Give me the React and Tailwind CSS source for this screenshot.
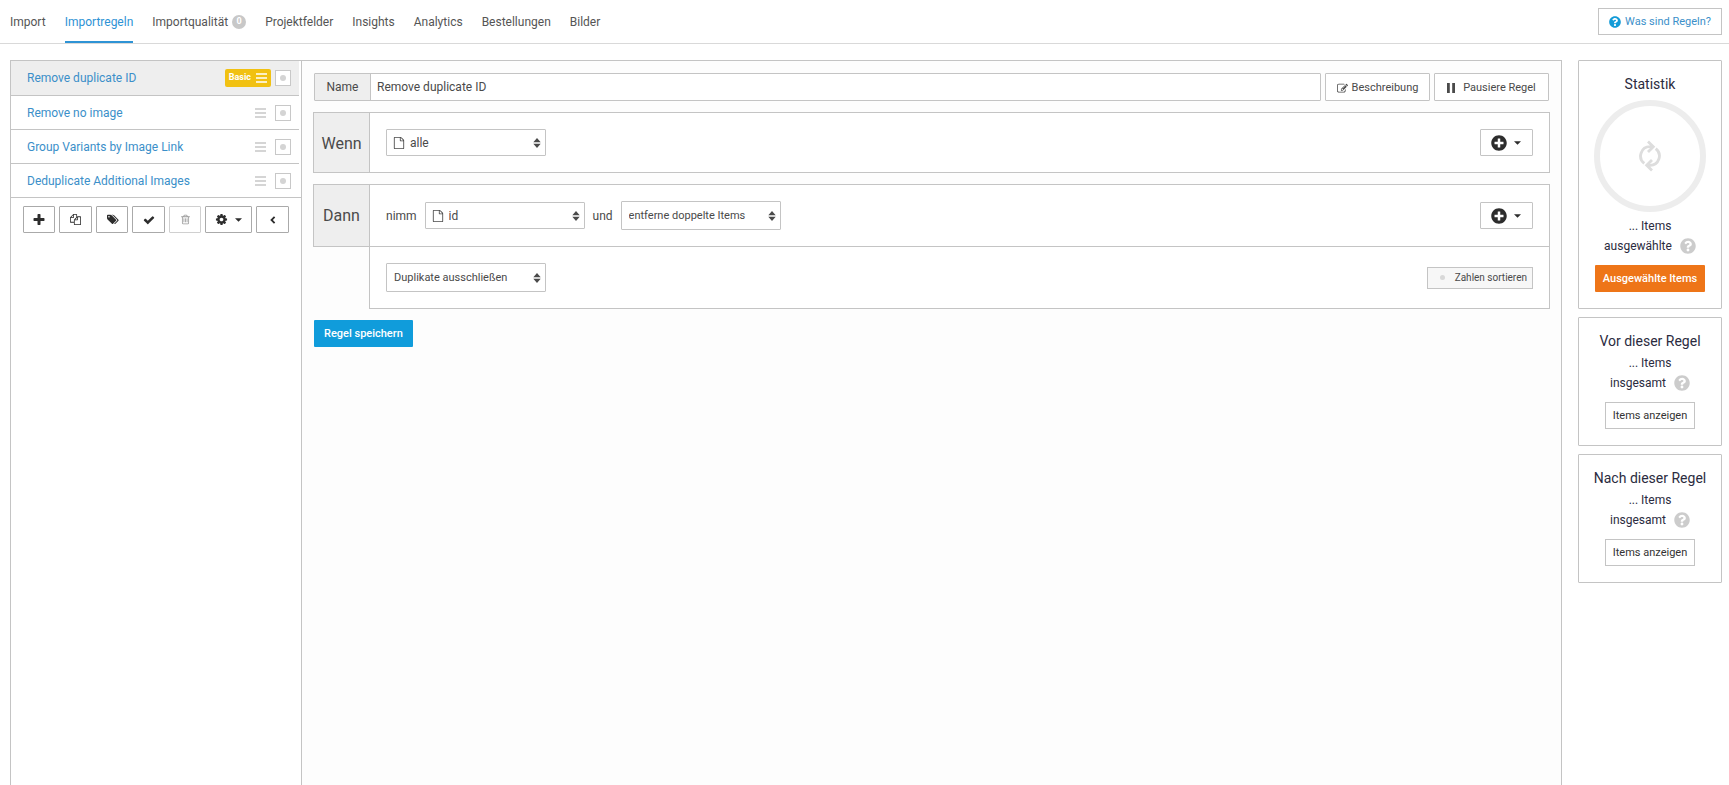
import React from "react";
import { FaPlusCircle, FaQuestionCircle } from "react-icons/fa";

const PATHS = {
  plus: "M1600 736v192q0 40-28 68t-68 28h-416v416q0 40-28 68t-68 28h-192q-40 0-68-28t-28-68v-416h-416q-40 0-68-28t-28-68v-192q0-40 28-68t68-28h416v-416q0-40 28-68t68-28h192q40 0 68 28t28 68v416h416q40 0 68 28t28 68z",
  copy: "M1696 384q40 0 68 28t28 68v1216q0 40-28 68t-68 28h-960q-40 0-68-28t-28-68v-288h-544q-40 0-68-28t-28-68v-672q0-40 20-88t48-76l408-408q28-28 76-48t88-20h416q40 0 68 28t28 68v328q68-40 128-40h416zm-544 213l-299 299h299v-299zm-640-384l-299 299h299v-299zm196 647l316-316v-416h-384v416q0 40-28 68t-68 28h-416v640h512v-256q0-40 20-88t48-76zm956 804v-1152h-384v416q0 40-28 68t-68 28h-416v640h896z",
  edit: "M888 1184l116-116-152-152-116 116v56h96v96h56zm440-720q-16-16-33 1l-350 350q-17 17-1 33t33-1l350-350q17-17 1-33zm80 594v190q0 119-84.5 203.5t-203.5 84.5h-832q-119 0-203.5-84.5t-84.500-203.500v-832q0-119 84.500-203.500t203.500-84.500h832q63 0 117 25 15 7 18 23 3 17-9 29l-49 49q-14 14-32 8-23-6-45-6h-832q-66 0-113 47t-47 113v832q0 66 47 113t113 47h832q66 0 113-47t47-113v-126q0-13 9-22l64-64q15-15 35-7t20 29zm-96-738l288 288-672 672h-288v-288zm444 132l-92 92-288-288 92-92q28-28 68-28t68 28l152 152q28 28 28 68t-28 68z",
  file: "M1596 380q28 28 48 76t20 88v1152q0 40-28 68t-68 28h-1344q-40 0-68-28t-28-68v-1600q0-40 28-68t68-28h896q40 0 88 20t76 48zm-444-244v376h376q-10-29-22-41l-313-313q-12-12-41-22zm384 1528v-1024h-416q-40 0-68-28t-28-68v-416h-768v1536h1280z",
  trash: "M704 736v576q0 14-9 23t-23 9h-64q-14 0-23-9t-9-23v-576q0-14 9-23t23-9h64q14 0 23 9t9 23zm256 0v576q0 14-9 23t-23 9h-64q-14 0-23-9t-9-23v-576q0-14 9-23t23-9h64q14 0 23 9t9 23zm256 0v576q0 14-9 23t-23 9h-64q-14 0-23-9t-9-23v-576q0-14 9-23t23-9h64q14 0 23 9t9 23zm128 724v-948h-896v948q0 22 7 40.5t14.5 27 10.5 8.5h832q3 0 10.5-8.5t14.5-27 7-40.5zm-672-1076h448l-48-117q-7-9-17-11h-317q-10 2-17 11zm928 32v64q0 14-9 23t-23 9h-96v948q0 83-47 143.5t-113 60.5h-832q-66 0-113-58.5t-47-141.5v-952h-96q-14 0-23-9t-9-23v-64q0-14 9-23t23-9h309l70-167q15-37 54-63t79-26h320q40 0 79 26t54 63l70 167h309q14 0 23 9t9 23z",
  tags: "M448 448q0-53-37.5-90.5t-90.5-37.5-90.5 37.5-37.5 90.5 37.5 90.5 90.5 37.5 90.5-37.5 37.5-90.5zm1067 576q0 53-37 90l-491 492q-39 37-91 37-53 0-90-37l-715-716q-38-37-64.5-101t-26.5-117v-416q0-52 38-90t90-38h416q53 0 117 26.5t102 64.5l715 714q37 39 37 91zm384 0q0 53-37 90l-491 492q-39 37-91 37-36 0-59-14t-53-45l470-470q37-37 37-90 0-52-37-91l-715-714q-38-38-102-64.5t-117-26.5h224q53 0 117 26.5t102 64.5l715 714q37 39 37 91z",
  check: "M1671 566q0 40-28 68l-724 724-136 136q-28 28-68 28t-68-28l-136-136-362-362q-28-28-28-68t28-68l136-136q28-28 68-28t68 28l294 295 656-657q28-28 68-28t68 28l136 136q28 28 28 68z",
  cog: "M1152 896q0-106-75-181t-181-75-181 75-75 181 75 181 181 75 181-75 75-181zm512-109v222q0 12-8 23t-20 13l-185 28q-19 54-39 91 35 50 107 138 10 12 10 25t-9 23q-27 37-99 108t-94 71q-12 0-26-9l-138-108q-44 23-91 38-16 136-29 186-7 28-36 28h-222q-14 0-24.5-8.5t-11.5-21.5l-28-184q-49-16-90-37l-141 107q-10 9-25 9-14 0-25-11-126-114-165-168-7-10-7-23 0-12 8-23 15-21 51-66.5t54-70.5q-27-50-41-99l-183-27q-13-2-21-12.5t-8-23.5v-222q0-12 8-23t19-13l186-28q14-46 39-92-40-57-107-138-10-12-10-24 0-10 9-23 26-36 98.5-107.5t94.5-71.5q13 0 26 10l138 107q44-23 91-38 16-136 29-186 7-28 36-28h222q14 0 24.5 8.5t11.5 21.5l28 184q49 16 90 37l142-107q9-9 24-9 13 0 25 10 129 119 165 170 7 8 7 22 0 12-8 23-15 21-51 66.5t-54 70.5q26 50 41 98l183 28q13 2 21 12.5t8 23.5z",
};

function Icon({ name, className }) {
  return (
    <svg viewBox="0 0 1792 1792" fill="currentColor" aria-hidden="true" className={`shrink-0 overflow-visible ${className}`}>
      <path d={PATHS[name]} />
    </svg>
  );
}

function Caret() {
  return (
    <svg viewBox="0 0 8 4" fill="currentColor" aria-hidden="true" className="h-1 w-[7px] shrink-0">
      <path d="M0 0h8L4 4z" />
    </svg>
  );
}

function Bars({ className = "" }) {
  return (
    <svg viewBox="0 0 11 10" fill="none" stroke="currentColor" strokeWidth="1.7" aria-hidden="true" className={`h-[10px] w-[11px] shrink-0 ${className}`}>
      <path d="M0 1h11M0 5h11M0 9h11" />
    </svg>
  );
}

const NAV = ["Import", "Importregeln", "Importqualität", "Projektfelder", "Insights", "Analytics", "Bestellungen", "Bilder"];

function Header() {
  return (
    <header className="flex h-11 items-stretch justify-between border-b border-[#d9d9d9] pr-[7px] pl-[10px]">
      <nav className="flex gap-[19px] text-[12px] text-[#555]">
        {NAV.map((label, i) => (
          <a
            key={label}
            href="#"
            className={
              i === 1
                ? "flex items-center border-b-2 border-[#2e93d5] pt-[2px] text-[#2e93d5]"
                : "flex items-center gap-1"
            }
          >
            {label}
            {i === 2 && (
              <span className="flex size-[14px] items-center justify-center rounded-full bg-[#c8c8c8] text-[9px] font-bold text-white">0</span>
            )}
          </a>
        ))}
      </nav>
      <button className="mt-2 flex h-[27px] items-center gap-1 border border-[#c4c4c4] bg-white px-[10px] pt-px text-[11px] text-[#3b8fc9]">
        <FaQuestionCircle className="size-3 text-[#139bd8]" />
        Was sind Regeln?
      </button>
    </header>
  );
}

const RULES = ["Remove duplicate ID", "Remove no image", "Group Variants by Image Link", "Deduplicate Additional Images"];

function ToolButton({ label, className = "w-8", disabled, children }) {
  return (
    <button
      aria-label={label}
      disabled={disabled}
      className={`flex h-[27px] items-center justify-center rounded-[1px] border bg-white ${disabled ? "border-[#d0d0d0] text-[#999]" : "border-[#aaa] text-[#2d2d2d]"} ${className}`}
    >
      {children}
    </button>
  );
}

function RuleList() {
  return (
    <aside className="w-[291px] shrink-0 border-t border-l border-[#c4c4c4]">
      <ul>
        {RULES.map((rule, i) => (
          <li
            key={rule}
            className={`flex items-center border-b border-[#c4c4c4] pl-4 ${i === 0 ? "h-[35px] bg-[#eee]" : "h-[34px]"} ${i < 3 ? "mr-[2px] pr-2" : "pr-[10px]"}`}
          >
            <a href="#" className="flex-1 text-[12px] text-[#3b8fc9]">{rule}</a>
            {i === 0 ? (
              <span className="mr-1 flex h-[18px] items-center gap-[5px] rounded-[2px] bg-[#f1c112] px-1 text-[9px] font-bold text-white">
                Basic
                <Bars />
              </span>
            ) : (
              <Bars className="mr-[9px] text-[#c8c8c8]" />
            )}
            <button aria-label={`${rule} umschalten`} className="flex size-4 items-center justify-center border border-[#c8c8c8] bg-white">
              <span className="size-[6px] rounded-full bg-[#d4d4d4]" />
            </button>
          </li>
        ))}
      </ul>
      <div className="flex gap-1 px-3 pt-2">
        <ToolButton label="Neu"><Icon name="plus" className="size-[14px]" /></ToolButton>
        <ToolButton label="Kopieren" className="w-[33px]"><Icon name="copy" className="size-[11px]" /></ToolButton>
        <ToolButton label="Tags"><Icon name="tags" className="size-[11px]" /></ToolButton>
        <ToolButton label="Anwenden" className="w-[33px]"><Icon name="check" className="size-3" /></ToolButton>
        <ToolButton label="Löschen" disabled><Icon name="trash" className="size-[11px]" /></ToolButton>
        <ToolButton label="Einstellungen" className="w-[47px] gap-[7px]">
          <Icon name="cog" className="size-[13px]" />
          <Caret />
        </ToolButton>
        <ToolButton label="Einklappen" className="w-[33px]">
          <svg viewBox="0 0 6 8" fill="none" stroke="currentColor" strokeWidth="1.8" aria-hidden="true" className="h-2 w-[6px]">
            <path d="M4.6.9 1.5 4l3.1 3.1" />
          </svg>
        </ToolButton>
      </div>
    </aside>
  );
}

function Select({ label, value, icon }) {
  return (
    <div className={`relative flex w-40 items-center rounded-[1px] border border-[#c4c4c4] bg-white ${icon ? "h-[27px]" : "h-[29px]"}`}>
      {icon && <Icon name="file" className="pointer-events-none absolute left-[6px] size-3" />}
      <select
        aria-label={label}
        className={`h-full w-full appearance-none bg-transparent outline-none ${icon ? "pl-[23px] text-[12px]" : "pt-px pl-[7px] text-[11px]"}`}
      >
        <option>{value}</option>
      </select>
      <svg viewBox="0 0 8 10" fill="currentColor" aria-hidden="true" className="pointer-events-none absolute right-1 h-[10px] w-2">
        <path d="M.3 4.3h7.4L4 0zM.3 5.7h7.4L4 10z" />
      </svg>
    </div>
  );
}

function AddButton() {
  return (
    <button aria-label="Hinzufügen" className="ml-auto flex h-[27px] w-[53px] items-center justify-center gap-[7px] rounded-[1px] border border-[#c4c4c4] bg-white pr-[2px] text-[#2d2d2d]">
      <FaPlusCircle className="size-4" />
      <Caret />
    </button>
  );
}

function RuleEditor() {
  return (
    <main className="min-w-0 flex-1 border border-b-0 border-[#c4c4c4] bg-[#fdfdfd] px-[11px] pt-3 text-[#4a4a4a]">
      <div className="flex h-7 gap-1 px-px">
        <div className="flex min-w-0 flex-1 rounded-[1px] border border-[#c4c4c4] bg-white text-[12px]">
          <label htmlFor="rule-name" className="flex w-14 items-center justify-center border-r border-[#c4c4c4] bg-[#eee]">Name</label>
          <input id="rule-name" defaultValue="Remove duplicate ID" className="min-w-0 flex-1 px-[6px] outline-none" />
        </div>
        <button className="flex w-[105px] items-center justify-center gap-1 rounded-[1px] border border-[#c4c4c4] bg-white pt-[2px] text-[11px]">
          <Icon name="edit" className="size-[11px]" />
          Beschreibung
        </button>
        <button className="flex w-[115px] items-center justify-center gap-2 rounded-[1px] border border-[#c4c4c4] bg-white pt-[2px] text-[11px]">
          <svg viewBox="0 0 8 10" fill="currentColor" aria-hidden="true" className="h-[10px] w-2">
            <path d="M0 0h2.8v10H0zM5.2 0H8v10H5.2z" />
          </svg>
          Pausiere Regel
        </button>
      </div>

      <section className="mt-[11px] flex h-[61px] border border-[#c4c4c4] bg-white">
        <h2 className="flex w-14 items-center justify-center border-r border-[#c4c4c4] bg-[#eee] pt-[2px] text-[16px]">Wenn</h2>
        <div className="flex flex-1 items-center px-4">
          <Select label="Feld der Bedingung" value="alle" icon />
          <AddButton />
        </div>
      </section>

      <section className="mt-[11px]">
        <div className="flex h-[63px] border border-[#c4c4c4] bg-white">
          <h2 className="flex w-14 items-center justify-center border-r border-[#c4c4c4] bg-[#eee] pt-px text-[16px]">Dann</h2>
          <div className="flex flex-1 items-center gap-2 px-4 text-[12px]">
            <span>nimm</span>
            <Select label="Feld der Aktion" value="id" icon />
            <span>und</span>
            <Select label="Aktion" value="entferne doppelte Items" />
            <AddButton />
          </div>
        </div>
        <div className="ml-14 flex h-[62px] items-center justify-between border border-t-0 border-[#c4c4c4] bg-white px-4">
          <Select label="Umgang mit Duplikaten" value="Duplikate ausschließen" />
          <button className="flex h-[22px] items-center gap-[10px] border border-[#c4c4c4] bg-[#f7f7f7] pr-[5px] pl-3 text-[10px]">
            <span className="size-[5px] rounded-full bg-[#d8d8d8]" />
            Zahlen sortieren
          </button>
        </div>
      </section>

      <button className="mt-[11px] ml-px flex h-[27px] items-center rounded-[1px] bg-[#109cdb] px-[10px] pt-px text-[11px] font-medium text-white">Regel speichern</button>
    </main>
  );
}

function RefreshIcon() {
  return (
    <svg viewBox="0 0 24 32" fill="none" stroke="currentColor" strokeWidth="2.8" aria-hidden="true" className="h-8 w-6">
      <path d="M6.300 23.400A9.300 9.300 0 0 1 12 6.700h3M10 1.500 15.300 6.700 10 12" />
      <path d="M17.700 8.600A9.300 9.300 0 0 1 12 25.300H9M14 30.500 8.700 25.300 14 20" />
    </svg>
  );
}

function Card({ title, scope, className, ring, children }) {
  return (
    <section className={`flex flex-col items-center rounded-[1px] border border-[#c4c4c4] bg-white pt-[13px] text-[12px] text-[#2b2b40] ${className}`}>
      <h3 className="mb-[2px] text-[14px] leading-5">{title}</h3>
      {ring}
      <p className="leading-5">... Items</p>
      <p className="flex items-center gap-2 leading-5">
        {scope}
        <FaQuestionCircle className="size-4 text-[#ccc]" />
      </p>
      {children}
    </section>
  );
}

function Stats() {
  const outline = "mt-[9px] flex h-[27px] w-[90px] items-center justify-center border border-[#c4c4c4] bg-white pt-px text-[11px] text-[#333]";
  return (
    <aside className="ml-4 flex w-36 shrink-0 flex-col gap-2">
      <Card
        title="Statistik"
        scope="ausgewählte"
        className="h-[249px]"
        ring={
          <div className="my-1 flex size-28 items-center justify-center rounded-full border-[6px] border-[#ededed] text-[#ddd]">
            <RefreshIcon />
          </div>
        }
      >
        <button className="mt-[9px] flex h-[27px] w-[110px] items-center justify-center rounded-[1px] bg-[#ee7518] pt-px text-[11px] font-medium text-white">Ausgewählte Items</button>
      </Card>
      <Card title="Vor dieser Regel" scope="insgesamt" className="h-[129px]">
        <button className={outline}>Items anzeigen</button>
      </Card>
      <Card title="Nach dieser Regel" scope="insgesamt" className="h-[129px]">
        <button className={outline}>Items anzeigen</button>
      </Card>
    </aside>
  );
}

export default function App() {
  return (
    <div className="flex min-h-screen flex-col bg-white font-['Roboto',sans-serif]">
      <Header />
      <div className="flex flex-1 items-stretch pt-4 pr-[7px] pl-[10px]">
        <RuleList />
        <RuleEditor />
        <Stats />
      </div>
    </div>
  );
}
